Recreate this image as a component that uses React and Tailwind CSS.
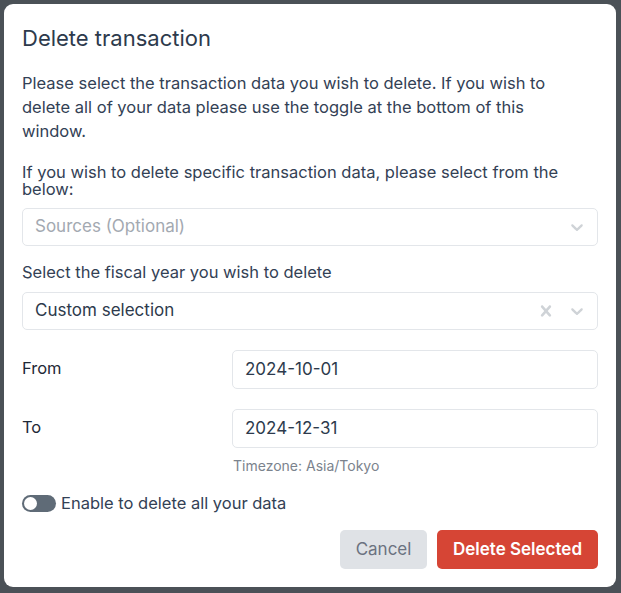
import React, { useState } from "react";

const font = { fontFamily: "Inter, 'Noto Sans', sans-serif" };

function Chevron() {
  return (
    <svg viewBox="0 0 20 20" className="w-5 h-5 fill-[#cfd3d7]">
      <path d="M4.516 7.548c0.436-0.446 1.043-0.481 1.576 0l3.908 3.747 3.908-3.747c0.533-0.481 1.141-0.446 1.574 0 0.436 0.445 0.408 1.197 0 1.615-0.406 0.418-4.695 4.502-4.695 4.502-0.217 0.223-0.502 0.335-0.787 0.335s-0.57-0.112-0.789-0.335c0 0-4.287-4.084-4.695-4.502s-0.436-1.17 0-1.615z" />
    </svg>
  );
}

function Cross() {
  return (
    <svg viewBox="0 0 20 20" className="w-[22px] h-[22px] fill-[#cfd3d7]">
      <path d="M14.348 14.849c-0.469 0.469-1.229 0.469-1.697 0l-2.651-3.030-2.651 3.029c-0.469 0.469-1.229 0.469-1.697 0-0.469-0.469-0.469-1.229 0-1.697l2.758-3.15-2.759-3.152c-0.469-0.469-0.469-1.228 0-1.697s1.228-0.469 1.697 0l2.652 3.031 2.651-3.031c0.469-0.469 1.228-0.469 1.697 0s0.469 1.229 0 1.697l-2.758 3.152 2.758 3.15c0.469 0.469 0.469 1.229 0 1.698z" />
    </svg>
  );
}

export default function App() {
  const [deleteAll, setDeleteAll] = useState(false);

  return (
    <div className="w-[621px] h-[593px] bg-[#4b5157] p-[4px] overflow-hidden" style={font}>
      <div className="w-[612px] h-[583px] bg-white rounded-[9px] px-[18px] pt-[20px] pb-[18px] flex flex-col text-[#334155]">
        <h2 className="text-[22px] leading-[28px] text-[#2d3a4c]">Delete transaction</h2>

        <p className="mt-[19px] max-w-[555px] text-[16.5px] leading-[24px]">
          Please select the transaction data you wish to delete. If you wish to
          delete all of your data please use the toggle at the bottom of this
          window.
        </p>

        <p className="mt-[21px] text-[16.5px] leading-[17px]">
          If you wish to delete specific transaction data, please select from the
          below:
        </p>
        <div className="mt-[10px] h-[38px] border border-[#e3e6ea] rounded-[5px] flex items-center pl-[12px] pr-[10px]">
          <span className="flex-1 text-[17px] text-[#a3a9b1]">Sources (Optional)</span>
          <Chevron />
        </div>

        <p className="mt-[14px] text-[16.5px] leading-[24px]">
          Select the fiscal year you wish to delete
        </p>
        <div className="mt-[8px] h-[38px] border border-[#e3e6ea] rounded-[5px] flex items-center pl-[12px] pr-[10px]">
          <span className="flex-1 text-[17px] text-[#2d3a4c]">Custom selection</span>
          <Cross />
          <span className="w-[10px]" />
          <Chevron />
        </div>

        <div className="mt-[20px] flex items-center">
          <span className="w-[210px] text-[16.5px] text-[#1f2937] -mt-[3px]">From</span>
          <div className="flex-1 h-[39px] border border-[#e3e6ea] rounded-[5px] flex items-center px-[12px] text-[17px] text-[#2d3a4c]">
            2024-10-01
          </div>
        </div>
        <div className="mt-[20px] flex items-center">
          <span className="w-[210px] text-[16.5px] text-[#1f2937] -mt-[3px]">To</span>
          <div className="flex-1 h-[39px] border border-[#e3e6ea] rounded-[5px] flex items-center px-[12px] text-[17px] text-[#2d3a4c]">
            2024-12-31
          </div>
        </div>
        <p className="mt-[9px] ml-[211px] text-[14px] leading-[18px] text-[#7b838d]">
          Timezone: Asia/Tokyo
        </p>

        <label className="mt-[16px] flex items-center gap-[5px] cursor-pointer">
          <button
            type="button"
            onClick={() => setDeleteAll(!deleteAll)}
            className={
              deleteAll
                ? "w-[34px] h-[17px] rounded-full bg-[#d64535] flex items-center justify-end px-[2px]"
                : "w-[34px] h-[17px] rounded-full bg-[#5f6b77] flex items-center px-[2px]"
            }
          >
            <span className="w-[13px] h-[13px] rounded-full bg-white" />
          </button>
          <span className="text-[16.5px] text-[#334155]">Enable to delete all your data</span>
        </label>

        <div className="mt-auto flex justify-end gap-[10px]">
          <button className="w-[87px] h-[39px] rounded-[5px] bg-[#dfe2e6] text-[17px] text-[#6b7280]">
            Cancel
          </button>
          <button className="w-[161px] h-[39px] rounded-[5px] bg-[#d64535] text-[17px] font-semibold text-white">
            Delete Selected
          </button>
        </div>
      </div>
    </div>
  );
}
